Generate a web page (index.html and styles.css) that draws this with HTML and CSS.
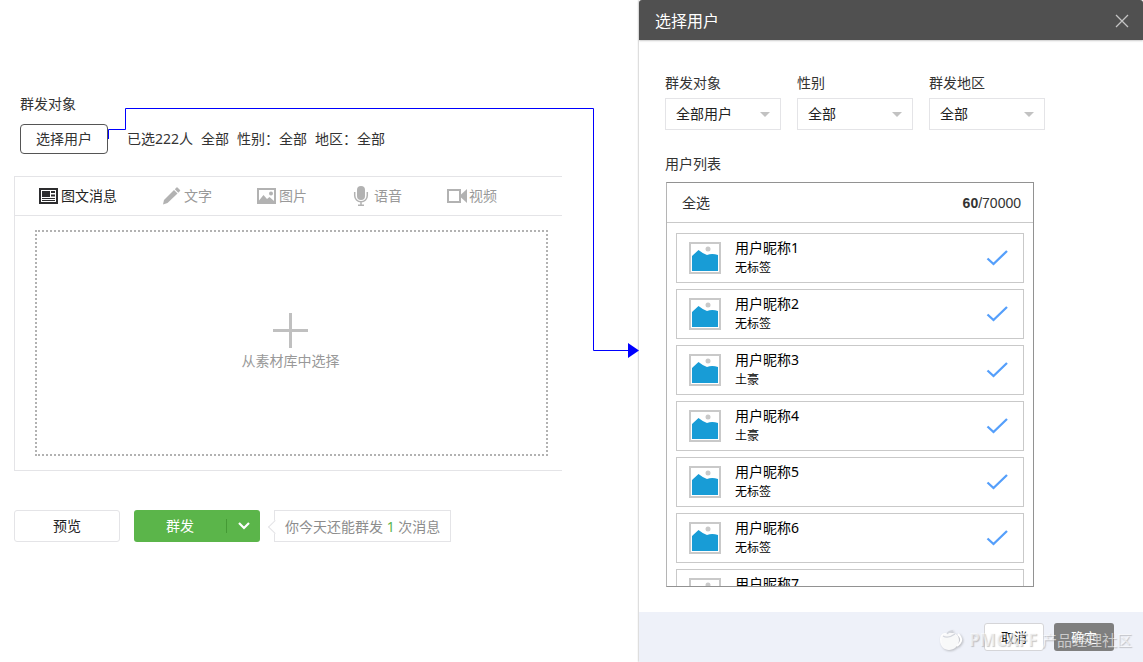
FILE: index.html
```html
<!DOCTYPE html>
<html lang="zh-CN">
<head>
<meta charset="utf-8">
<meta name="viewport" content="width=device-width, initial-scale=1">
<title>群发消息</title>
<link rel="stylesheet" href="styles.css">
</head>
<body>
<svg width="0" height="0" class="defs" aria-hidden="true">
  <symbol id="avatar" viewBox="0 0 32 32">
    <rect x="1" y="1" width="30" height="30" fill="#fff" stroke="#c9c9c9" stroke-width="2"/>
    <circle cx="19" cy="7" r="2.500" fill="#c9c9c9"/>
    <path d="M3 14 9.500 8 Q13 11 18 13 Q23 11 29 13V29H3Z" fill="#189cd6"/>
  </symbol>
  <symbol id="check" viewBox="0 0 22 16">
    <path d="M1.500 8.500 7.500 14 21 1" fill="none" stroke="#559ffb" stroke-width="2.300"/>
  </symbol>
</svg>
<div class="page">
  <main class="compose">
    <h2 class="label">群发对象</h2>
    <div class="target">
      <button class="btn-pick" type="button">选择用户</button>
      <p class="summary"><span>已选222人</span><span>全部</span><span>性别：全部</span><span>地区：全部</span></p>
    </div>

    <section class="panel">
      <nav class="tabs">
        <button class="tab active" type="button">
          <svg width="20" height="20" viewBox="0 0 20 20"><path fill="#2d2d2f" fill-rule="evenodd" d="M0 2H19V18H0ZM2 4V16H17V4Z"/><path fill="#2d2d2f" d="M3 5h8v6H3zM12 5h4v2h-4zM12 8.500h4v2h-4zM3 12h13v1H3zM3 14h13v1H3z"/></svg>图文消息</button>
        <button class="tab" type="button">
          <svg width="20" height="20" viewBox="0 0 20 20"><g fill="#b2b2b2"><path d="M1 18.500 2 14 12 4 15.500 7.500 5.500 17Z"/><path d="M12.800 3.200 14.500 1.500Q15 1 15.500 1.500L18 4Q18.500 4.500 18 5L16.300 6.700Z"/></g></svg>文字</button>
        <button class="tab" type="button">
          <svg width="20" height="20" viewBox="0 0 20 20"><path fill="#b2b2b2" fill-rule="evenodd" d="M0 2H19V18H0ZM2 4V16H17V4Z"/><path fill="#b2b2b2" d="M2 14.500 6.500 9 10 13 12.500 11 17 15V16.500H2Z"/><circle cx="14" cy="7.500" r="2" fill="#b2b2b2"/></svg>图片</button>
        <button class="tab" type="button">
          <svg width="20" height="20" viewBox="0 0 20 20"><rect x="5" y="0" width="8" height="14" rx="4" fill="#b2b2b2"/><path fill="none" stroke="#b2b2b2" stroke-width="1.500" d="M2.700 6V9.500a6.300 6.300 0 0 0 12.600 0V6M9 16V19M6 19.200H12"/></svg>语音</button>
        <button class="tab" type="button">
          <svg width="20" height="20" viewBox="0 0 20 20"><path fill="none" stroke="#b2b2b2" stroke-width="2" d="M1 4H13V16H1Z"/><path fill="#b2b2b2" d="M20 3V17L14 11.500V8.500Z"/></svg>视频</button>
      </nav>
      <button class="drop" type="button">
        <svg width="35" height="35" viewBox="0 0 35 35"><path fill="#c0c0c0" d="M16 0h3v16h16v3H19v16h-3V19H0v-3h16z"/></svg>
        <span>从素材库中选择</span>
      </button>
    </section>

    <div class="actions">
      <button class="btn-preview" type="button">预览</button>
      <div class="split">
        <button class="split-main" type="button">群发</button>
        <button class="split-more" type="button" aria-label="更多"><svg width="12" height="8" viewBox="0 0 12 8"><path d="M1 1 6 6 11 1" fill="none" stroke="#fff" stroke-width="2.200"/></svg></button>
      </div>
      <p class="hint">你今天还能群发 <b>1</b> 次消息</p>
    </div>
  </main>

  <section class="dialog" aria-labelledby="dialog-title">
    <header class="dialog-head">
      <h1 id="dialog-title">选择用户</h1>
      <button class="close" type="button" aria-label="关闭"><svg width="14" height="14" viewBox="0 0 14 14"><path d="M1 1 13 13M13 1 1 13" stroke="#c4c4c4" stroke-width="1.300"/></svg></button>
    </header>
    <div class="dialog-body">
      <div class="filters">
        <div class="field"><label for="f-target">群发对象</label><div class="select"><select id="f-target"><option>全部用户</option></select></div></div>
        <div class="field"><label for="f-sex">性别</label><div class="select"><select id="f-sex"><option>全部</option></select></div></div>
        <div class="field"><label for="f-area">群发地区</label><div class="select"><select id="f-area"><option>全部</option></select></div></div>
      </div>
      <h2 class="label">用户列表</h2>
      <div class="users">
        <div class="users-head"><button class="all" type="button">全选</button><span class="count"><b>60</b>/70000</span></div>
        <ul class="users-list">
          <li class="user"><svg class="pic"><use href="#avatar"/></svg><div class="info"><strong>用户昵称1</strong><span>无标签</span></div><svg class="tick"><use href="#check"/></svg></li>
          <li class="user"><svg class="pic"><use href="#avatar"/></svg><div class="info"><strong>用户昵称2</strong><span>无标签</span></div><svg class="tick"><use href="#check"/></svg></li>
          <li class="user"><svg class="pic"><use href="#avatar"/></svg><div class="info"><strong>用户昵称3</strong><span>土豪</span></div><svg class="tick"><use href="#check"/></svg></li>
          <li class="user"><svg class="pic"><use href="#avatar"/></svg><div class="info"><strong>用户昵称4</strong><span>土豪</span></div><svg class="tick"><use href="#check"/></svg></li>
          <li class="user"><svg class="pic"><use href="#avatar"/></svg><div class="info"><strong>用户昵称5</strong><span>无标签</span></div><svg class="tick"><use href="#check"/></svg></li>
          <li class="user"><svg class="pic"><use href="#avatar"/></svg><div class="info"><strong>用户昵称6</strong><span>无标签</span></div><svg class="tick"><use href="#check"/></svg></li>
          <li class="user"><svg class="pic"><use href="#avatar"/></svg><div class="info"><strong>用户昵称7</strong></div><svg class="tick"><use href="#check"/></svg></li>
        </ul>
      </div>
    </div>
    <footer class="dialog-foot">
      <button class="cancel" type="button">取消</button>
      <button class="confirm" type="button">确定</button>
      <div class="watermark">
        <svg width="26" height="24" viewBox="0 0 26 24"><path d="M10 5C4 4 2 8 2 12c0 6 4 10 9 10s10-4 10-10C21 7 17 4 10 5Z" fill="#fff" fill-opacity=".9"/><path d="M20 6q4 4 3 7t-4 5" fill="none" stroke="#fff" stroke-width="2"/><path d="M5 8q5 3 12-2M9 6q2-3 6-3" fill="none" stroke="#d3d6dd" stroke-width="1.300"/></svg>
        <b>PMCAFF</b><span>产品经理社区</span>
      </div>
    </footer>
  </section>

  <svg class="connector" width="640" height="360" viewBox="0 0 640 360" aria-hidden="true">
    <path d="M108.500 139V129.500H125.500V108.500H593.500V350.500H630" fill="none" stroke="#00f"/>
    <path d="M628 343 639 350.500 628 358Z" fill="#00f"/>
  </svg>
</div>
</body>
</html>
```
FILE: styles.css
```css
* { box-sizing: border-box; }

body {
  margin: 0;
  background: #fff;
  color: #333;
  font: 14px/20px "Noto Sans", "Noto Sans CJK SC", sans-serif;
}

h1, h2, p, ul { margin: 0; padding: 0; font-weight: 400; }
ul { list-style: none; }
svg { display: block; flex: none; }
.defs { position: absolute; }

button, select {
  margin: 0;
  padding: 0;
  border: 0;
  background: none;
  color: inherit;
  font: inherit;
}

.page {
  position: relative;
  display: grid;
  grid-template-columns: 639fr 504fr;
  height: 100vh;
  min-height: 560px;
}

.label { font-size: 14px; line-height: 20px; }

/* Compose area */
.compose { padding: 94px 77px 0 14px; }
.compose .label { padding-left: 6px; }

.target {
  display: flex;
  align-items: center;
  gap: 19px;
  margin: 10px 0 22px 6px;
}

.btn-pick {
  width: 88px;
  height: 30px;
  border: 1px solid #555;
  border-radius: 4px;
  background: #fff;
}

.summary { display: flex; gap: 8px; white-space: nowrap; }

.panel {
  border: 1px solid #e4e4e7;
  border-right: 0;
}

.tabs {
  display: flex;
  gap: 45px;
  height: 39px;
  padding-left: 24px;
  border-bottom: 1px solid #e4e4e7;
}

.tab {
  display: flex;
  align-items: center;
  gap: 2px;
  color: #999;
  white-space: nowrap;
}

.tab.active { color: #222; }

.drop {
  display: flex;
  flex-direction: column;
  align-items: center;
  justify-content: center;
  gap: 3px;
  width: calc(100% - 34px);
  height: 226px;
  margin: 14px 14px 14px 20px;
  padding: 0 2px 2px 0;
  border: 2px dotted #b2b2b2;
  color: #999;
}

.actions {
  display: flex;
  gap: 14px;
  margin-top: 39px;
}

.btn-preview {
  width: 106px;
  height: 32px;
  border: 1px solid #e4e4e7;
  border-radius: 3px;
  color: #222;
}

.split {
  display: flex;
  align-items: center;
  width: 126px;
  height: 32px;
  border-radius: 3px;
  background: #5bb54a;
  color: #fff;
}

.split-main { flex: 1; height: 32px; }

.split-more {
  display: flex;
  justify-content: center;
  align-items: center;
  width: 34px;
  height: 14px;
  border-left: 1px solid #459a35;
}

.hint {
  position: relative;
  height: 32px;
  padding: 0 10px;
  border: 1px solid #e4e4e7;
  color: #8d8d8d;
  line-height: 32px;
  white-space: nowrap;
}

.hint::before {
  content: "";
  position: absolute;
  left: -5px;
  top: 11px;
  width: 9px;
  height: 9px;
  border: 1px solid #e4e4e7;
  border-width: 0 0 1px 1px;
  background: #fff;
  transform: rotate(45deg);
}

.hint b { color: #5bb54a; font-weight: 400; }

/* User dialog */
.dialog {
  display: flex;
  flex-direction: column;
  min-height: 0;
  box-shadow: 0 0 2px #999;
}

.dialog-head {
  display: flex;
  align-items: center;
  justify-content: space-between;
  height: 40px;
  padding: 2px 14px 0 16px;
  border-radius: 3px 3px 0 0;
  background: #505050;
  box-shadow: 0 1px 2px #ccc;
  color: #fff;
}

.dialog-head h1 { font-size: 16px; line-height: 24px; }

.dialog-body {
  display: flex;
  flex: 1;
  flex-direction: column;
  min-height: 0;
  padding: 33px 26px 25px;
}

.filters { display: flex; gap: 16px; margin-bottom: 24px; }

.field { display: flex; flex-direction: column; gap: 5px; width: 116px; }

.select { position: relative; }

.select::after {
  content: "";
  position: absolute;
  right: 11px;
  top: 14px;
  border: 5px solid transparent;
  border-top-color: #c2c2c2;
  border-bottom: 0;
  pointer-events: none;
}

.select select {
  width: 100%;
  height: 32px;
  padding: 0 24px 0 10px;
  border: 1px solid #e4e4e7;
  border-radius: 0;
  background: #fff;
  color: #222;
  appearance: none;
}

.users {
  display: flex;
  flex: 1;
  flex-direction: column;
  min-height: 0;
  margin: 8px 83px 0 1px;
  border: 1px solid #929292;
  border-left-color: #b5b5b5;
}

.users-head {
  display: flex;
  flex: none;
  align-items: center;
  justify-content: space-between;
  height: 40px;
  padding: 0 12px 0 15px;
  border-bottom: 1px solid #c9c9c9;
}

.count { font-family: "Liberation Sans", sans-serif; }

.users-list {
  display: flex;
  flex-direction: column;
  gap: 6px;
  min-height: 0;
  padding: 10px 9px 0;
  overflow: hidden;
}

.user {
  display: flex;
  flex: none;
  align-items: center;
  height: 50px;
  padding: 0 15px 0 12px;
  border: 1px solid #c9c9c9;
  color: #000;
}

.pic { width: 32px; height: 32px; }
.tick { width: 22px; height: 16px; }

.info {
  display: flex;
  flex: 1;
  flex-direction: column;
  align-self: flex-start;
  margin: 4px 0 0 14px;
  font-size: 12px;
}

.info strong { font-size: 14px; font-weight: 400; }

.dialog-foot {
  position: relative;
  display: flex;
  align-items: center;
  justify-content: flex-end;
  gap: 10px;
  height: 50px;
  padding-right: 29px;
  background: #eef1f9;
}

.cancel, .confirm {
  width: 60px;
  height: 28px;
  border-radius: 3px;
  font-size: 13px;
}

.cancel { border: 1px solid #d5d5d8; background: #fff; color: #111; }
.confirm { background: #7f7f7f; color: #fff; }

.watermark {
  position: absolute;
  right: 11px;
  bottom: 10px;
  display: flex;
  align-items: center;
  gap: 5px;
  color: rgba(255, 255, 255, 0.6);
  font-size: 15px;
  line-height: 24px;
  white-space: nowrap;
  text-shadow: 1px 1px 1px rgba(120, 120, 120, 0.4);
  pointer-events: none;
}

.watermark b { font-size: 17px; }
.watermark svg { filter: drop-shadow(1px 1px 1px rgba(90, 90, 90, 0.4)); }

/* Flow arrow from the pick button to the dialog */
.connector {
  position: absolute;
  left: 0;
  top: 0;
  pointer-events: none;
}
```
